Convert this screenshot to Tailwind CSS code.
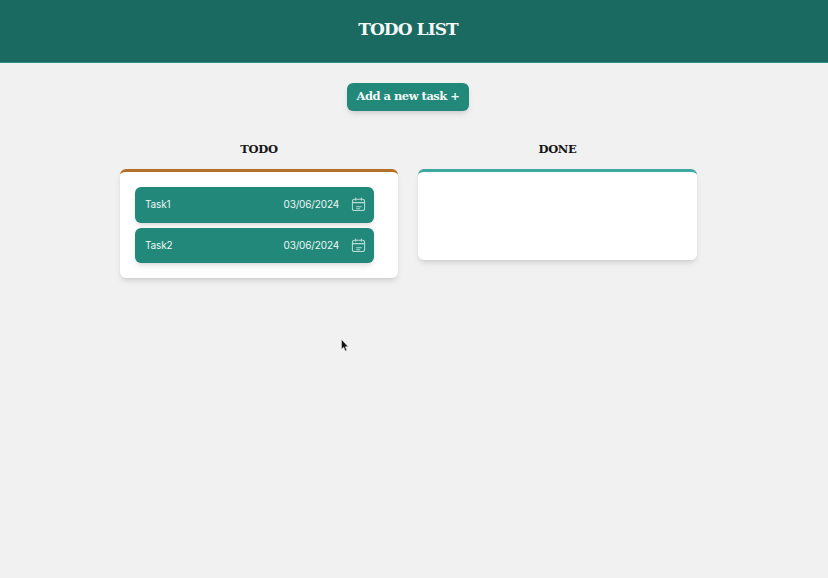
<!DOCTYPE html>
<html lang="en">
<head>
    <meta charset="utf-8">
    <title>Todo List</title>
    <script src="https://cdn.jsdelivr.net/npm/@tailwindcss/browser@4"></script>
</head>
<body class="bg-[#f1f1f2] h-[578px] overflow-hidden relative font-['Inter',sans-serif]">
    <!-- Header -->
    <header class="h-[63px] pr-[12px] bg-[#1b6a61] border-b border-[#2f8f85] flex items-center justify-center">
        <h1 class="font-['DejaVu_Serif',serif] font-bold text-[17px] tracking-[-0.9px] text-[#f4f8f7] -mt-[2px]">TODO LIST</h1>
    </header>

    <!-- Add button -->
    <div class="flex justify-center mt-[20px] pr-[12px]">
        <button class="w-[122px] h-[28px] rounded-[6px] bg-[#22887a] shadow-md text-[#f2f8f7] font-['DejaVu_Serif',serif] font-bold text-[11.5px] tracking-[-0.5px]">Add a new task +</button>
    </div>

    <!-- Columns -->
    <main class="flex items-start gap-[20px] ml-[120px] mt-[30px]">
        <section class="w-[278px]">
            <h2 class="text-center font-['DejaVu_Serif',serif] font-bold text-[11.5px] tracking-[-0.3px] leading-[16px] text-[#161616] h-[28px]">TODO</h2>
            <div class="bg-white rounded-[6px] border-t-[3px] border-[#b5702a] shadow-md p-[15px] flex flex-col gap-[5px]">
                <div class="h-[35.5px] w-[239px] rounded-[6px] bg-[#22887a] shadow-md flex items-center pl-[10px] pr-[8px] text-[#eef7f5] text-[10px] tracking-[-0.15px]">
                    <span>Task1</span>
                    <span class="ml-auto mr-[12px]">03/06/2024</span>
                    <svg class="w-[15px] h-[15px]" viewBox="0 0 16 16" fill="none" stroke="#b9dcd5" stroke-width="1.1" stroke-linecap="round">
                        <rect x="1.5" y="2.5" width="13" height="12" rx="2.2"/>
                        <path d="M1.5 6h13M5 1v2.5M11 1v2.5M6 10.5h5M6 12.5h3"/>
                    </svg>
                </div>
                <div class="h-[35.5px] w-[239px] rounded-[6px] bg-[#22887a] shadow-md flex items-center pl-[10px] pr-[8px] text-[#eef7f5] text-[10px] tracking-[-0.15px]">
                    <span>Task2</span>
                    <span class="ml-auto mr-[12px]">03/06/2024</span>
                    <svg class="w-[15px] h-[15px]" viewBox="0 0 16 16" fill="none" stroke="#b9dcd5" stroke-width="1.1" stroke-linecap="round">
                        <rect x="1.5" y="2.5" width="13" height="12" rx="2.2"/>
                        <path d="M1.5 6h13M5 1v2.5M11 1v2.5M6 10.5h5M6 12.5h3"/>
                    </svg>
                </div>
            </div>
        </section>

        <section class="w-[279px]">
            <h2 class="text-center font-['DejaVu_Serif',serif] font-bold text-[11.5px] tracking-[-0.3px] leading-[16px] text-[#161616] h-[28px]">DONE</h2>
            <div class="bg-white rounded-[6px] border-t-[3px] border-[#3fa89e] shadow-md h-[91px]"></div>
        </section>
    </main>

    <!-- Mouse pointer -->
    <svg class="absolute left-[341px] top-[339px] w-[8px] h-[13px]" viewBox="0 0 8 13">
        <path d="M0.5 0.5V10L2.7 8.2L4.3 12L5.8 11.3L4.3 7.7H7.2Z" fill="#111" stroke="#eee" stroke-width="0.5"/>
    </svg>
</body>
</html>
